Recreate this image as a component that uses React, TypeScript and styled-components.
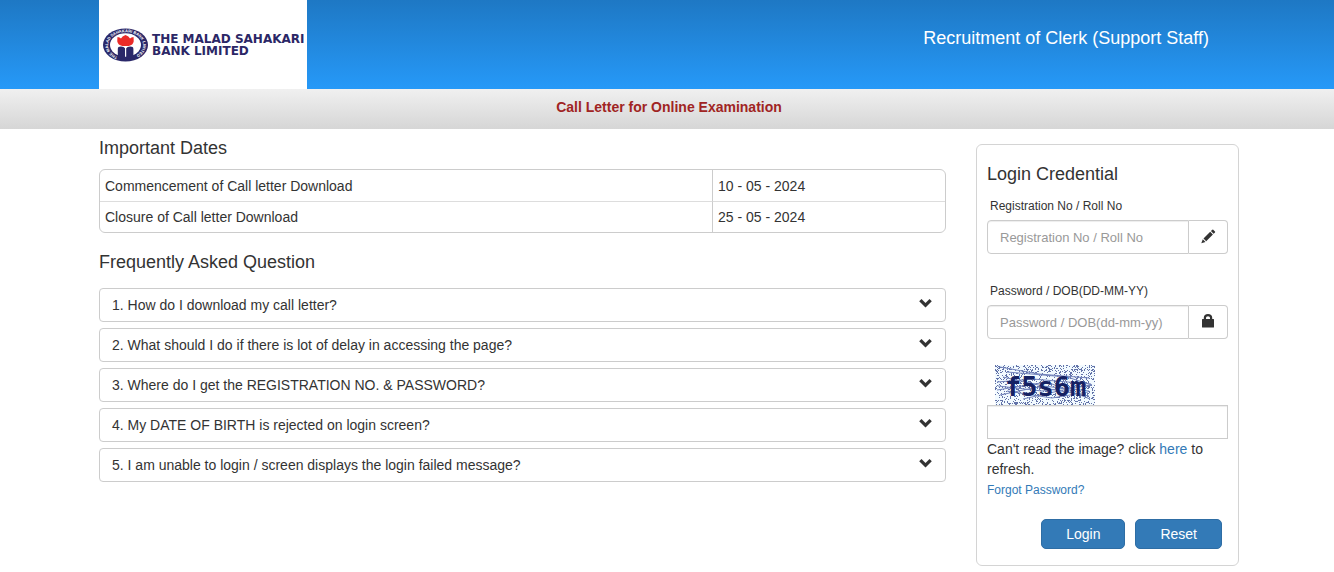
import React from "react";
import styled, { createGlobalStyle, css } from "styled-components";

const GlobalStyle = createGlobalStyle`
  *, *::before, *::after { box-sizing: border-box; }
  body {
    margin: 0;
    background: #fff;
    color: #333;
    font-family: "Liberation Sans", Arial, sans-serif;
    font-size: 14px;
    line-height: 20px;
  }
  input, button { font-family: inherit; color: inherit; }
`;

const Container = styled.div`
  width: 100%;
  max-width: 1144px;
  margin: 0 auto;
  padding-left: 4px;
`;

const TopBar = styled.header`
  background: linear-gradient(#1e78c4, #2699f8);
`;

const TopBarInner = styled(Container)`
  display: flex;
  justify-content: space-between;
  align-items: flex-start;
`;

const Brand = styled.div`
  display: flex;
  align-items: center;
  gap: 3px;
  width: 208px;
  height: 89px;
  padding-left: 3px;
  background: #fff;
`;

const BrandName = styled.span`
  color: #2b2766;
  font-family: "DejaVu Sans", Verdana, sans-serif;
  font-size: 12px;
  font-weight: bold;
  line-height: 12px;
  white-space: nowrap;
`;

const PostTitle = styled.h1`
  margin: 0;
  padding: 28px 30px 0 0;
  color: #fff;
  font-size: 18px;
  font-weight: normal;
  line-height: 20px;
`;

const SubBar = styled.div`
  height: 40px;
  padding-top: 8px;
  background: linear-gradient(#f0f0f0, #d6d6d6);
  text-align: center;
`;

const SubTitle = styled.h2`
  margin: 0;
  color: #a02423;
  font-size: 14px;
  line-height: 20px;
`;

const Columns = styled(Container)`
  display: grid;
  grid-template-columns: minmax(0, 1fr) 263px;
  gap: 30px;
  align-items: start;
`;

const Heading = styled.h3`
  margin: 0;
  font-size: 18px;
  font-weight: normal;
  line-height: 20px;
`;

const Section = styled.section<{ $gap: number; $top: number }>`
  display: flex;
  flex-direction: column;
  gap: ${(p) => p.$gap}px;
  padding-top: ${(p) => p.$top}px;
`;

const DatesTable = styled.table`
  width: 100%;
  border: 1px solid #ccc;
  border-radius: 6px;
  border-collapse: separate;
  border-spacing: 0;
  table-layout: fixed;
`;

const DateCell = styled.td`
  height: 31px;
  padding: 0 5px;
  tr + tr > & { border-top: 1px solid #ddd; }
  & + & { width: 233px; border-left: 1px solid #ccc; }
`;

const FaqList = styled.div`
  display: flex;
  flex-direction: column;
  gap: 6px;
`;

const FaqItem = styled.button`
  display: flex;
  justify-content: space-between;
  align-items: flex-start;
  height: 34px;
  padding: 6px 12px;
  border: 1px solid #ccc;
  border-radius: 4px;
  background: #fff;
  font-size: 14px;
  line-height: 20px;
  text-align: left;
  cursor: pointer;
`;

const LoginCard = styled.form`
  display: flex;
  flex-direction: column;
  margin-top: 15px;
  padding: 19px 10px 16px;
  border: 1px solid #d4d4d4;
  border-radius: 6px;
`;

const Field = styled.div`
  display: flex;
  flex-direction: column;
  gap: 4px;
  padding-top: 12px;
  margin-bottom: 15px;
`;

const FieldLabel = styled.label`
  padding-left: 3px;
  font-size: 12px;
  line-height: 20px;
`;

const InputGroup = styled.div`
  display: flex;
`;

const inputBase = css`
  min-width: 0;
  height: 34px;
  padding: 0 12px;
  border: 1px solid #ccc;
  background: #fff;
  box-shadow: inset 0 1px 1px rgba(0, 0, 0, 0.075);
  font-size: 13px;
  &::placeholder { color: #999; opacity: 1; }
`;

const GroupInput = styled.input`
  ${inputBase}
  flex: 1;
  border-radius: 4px 0 0 4px;
`;

const Addon = styled.span`
  display: flex;
  justify-content: center;
  padding-top: 8px;
  width: 39px;
  border: 1px solid #ccc;
  border-left: 0;
  border-radius: 0 4px 4px 0;
`;

const CaptchaInput = styled.input`
  ${inputBase}
`;

const CaptchaImage = styled.svg`
  display: block;
  margin: 11px 0 0 8px;
`;

const CaptchaHelp = styled.p`
  margin: 0 0 1px;
`;

const Link = styled.a<{ $small?: boolean }>`
  color: #337ab7;
  text-decoration: none;
  ${(p) => p.$small && "font-size: 12px; align-self: flex-start;"}
`;

const Actions = styled.div`
  display: flex;
  justify-content: flex-end;
  gap: 10px;
  padding: 19px 6px 0 0;
`;

const ActionButton = styled.button`
  height: 30px;
  padding: 0 24px;
  border: 1px solid #2e6da4;
  border-radius: 5px;
  background: #337ab7;
  color: #fff;
  font-size: 14px;
  line-height: 20px;
  cursor: pointer;
`;

const ChevronIcon = () => (
  <svg width="14" height="16" viewBox="0 0 14 16" aria-hidden="true">
    <path d="M.2 6.300 2.500 4 6.500 7.900 10.500 4l2.300 2.300-6.300 6.200z" fill="#333" />
  </svg>
);

const PencilIcon = () => (
  <svg width="15" height="15" viewBox="0 0 15 15" aria-hidden="true">
    <path d="m11.300.800.700-.300 2.200 2.200-.200.700-1.400 1.400-2.700-2.700zM9.200 2.800l2.700 2.700-6.700 6.700-2.700-2.700zM1.800 10.200l2.700 2.700L.3 14.200z" fill="#333" />
  </svg>
);

const LockIcon = () => (
  <svg width="15" height="14" viewBox="0 0 15 14" aria-hidden="true">
    <path d="M2.800 5V3.500Q3 0 7 0t4.200 3.500V5h1.400q.4 0 .4.400V13q0 .6-.6.600H1.600Q1 13.600 1 13V5.400Q1 5 1.400 5zM5 5h4V3.800Q9 2.200 7 2.200T5 3.800z" fill="#333" />
  </svg>
);

const Emblem = () => (
  <svg width="47" height="34" viewBox="0 0 47 34" aria-hidden="true">
    <ellipse cx="23.500" cy="17" rx="22.500" ry="16.500" fill="#2a2869" />
    <ellipse cx="23.500" cy="17" rx="15.500" ry="11.700" fill="#fff" />
    <defs>
      <path id="emblem-ring" d="M15.500 28.600A17.500 12.900 0 1 1 31.500 28.600" />
    </defs>
    <text fill="#fff" fontSize="4" fontWeight="bold">
      <textPath href="#emblem-ring">THE MALAD SAHAKARI BANK LIMITED</textPath>
    </text>
    <path d="M15.500 9q2.300.3 3.500 1.500 1-2.200 4.500-3.500Q27 8.300 28 10.500 29.200 9.300 31.500 9q.300 2.500.2 4.500-.6 3.500-5 4.500h-6.400q-4.400-1-5-4.500-.1-2 .2-4.500z" fill="#ea2b28" />
    <path d="M15.800 29.500V21q0-2.400 3.200-2.400 3 0 4 1.700V30q-4 .5-7.200-.500zM24.200 30v-9.700q1-1.700 4-1.700 3.200 0 3.200 2.400v8.500q-3.200 1-7.200.5z" fill="#2a2869" />
  </svg>
);

// Deterministic speckle so the captcha looks the same on every load.
const buildSpeckle = (width: number, height: number, density: number) => {
  let seed = 73;
  let d = "";
  for (let y = 0; y < height; y++) {
    for (let x = 0; x < width; x++) {
      seed = (seed * 16807) % 2147483647;
      if (seed / 2147483647 < density) d += `M${x} ${y}h1v1h-1z`;
    }
  }
  return d;
};
const speckle = buildSpeckle(100, 40, 0.25);

const Captcha = () => (
  <CaptchaImage width="100" height="40" viewBox="0 0 100 40" role="img" aria-label="Captcha">
    <rect width="100" height="40" fill="#f2faff" />
    <path d={speckle} fill="#6272a8" shapeRendering="crispEdges" />
    <path
      d="M5 2 44 9 94 13M12 7l60 5 25 8M2 17l36-3 58 5M3 21l44 5 50-6M8 12l40 9 46 5M5 30l38-8 51 9M12 26l45 7 36-6M28 34l40-9 28-5M2 25l50-8 43 17"
      fill="none"
      stroke="#7383bb"
      strokeWidth="1"
    />
    <text x="10" y="31" fill="#152163" fontFamily="DejaVu Sans Mono, monospace" fontSize="27" fontWeight="bold">
      f5s6m
    </text>
  </CaptchaImage>
);

const dates = [
  ["Commencement of Call letter Download", "10 - 05 - 2024"],
  ["Closure of Call letter Download", "25 - 05 - 2024"],
];

const questions = [
  "1. How do I download my call letter?",
  "2. What should I do if there is lot of delay in accessing the page?",
  "3. Where do I get the REGISTRATION NO. & PASSWORD?",
  "4. My DATE OF BIRTH is rejected on login screen?",
  "5. I am unable to login / screen displays the login failed message?",
];

export default function App() {
  return (
    <>
      <GlobalStyle />
      <TopBar>
        <TopBarInner>
          <Brand>
            <Emblem />
            <BrandName>
              THE MALAD SAHAKARI
              <br />
              BANK LIMITED
            </BrandName>
          </Brand>
          <PostTitle>Recruitment of Clerk (Support Staff)</PostTitle>
        </TopBarInner>
      </TopBar>
      <SubBar>
        <Container>
          <SubTitle>Call Letter for Online Examination</SubTitle>
        </Container>
      </SubBar>
      <Columns as="main">
        <div>
          <Section $top={9} $gap={11}>
            <Heading>Important Dates</Heading>
            <DatesTable>
              <tbody>
                {dates.map(([label, date]) => (
                  <tr key={label}>
                    <DateCell>{label}</DateCell>
                    <DateCell>{date}</DateCell>
                  </tr>
                ))}
              </tbody>
            </DatesTable>
          </Section>
          <Section $top={19} $gap={16}>
            <Heading>Frequently Asked Question</Heading>
            <FaqList>
              {questions.map((question) => (
                <FaqItem type="button" key={question}>
                  {question}
                  <ChevronIcon />
                </FaqItem>
              ))}
            </FaqList>
          </Section>
        </div>
        <LoginCard onSubmit={(e) => e.preventDefault()}>
          <Heading>Login Credential</Heading>
          <Field>
            <FieldLabel htmlFor="registration">Registration No / Roll No</FieldLabel>
            <InputGroup>
              <GroupInput id="registration" type="text" placeholder="Registration No / Roll No" />
              <Addon>
                <PencilIcon />
              </Addon>
            </InputGroup>
          </Field>
          <Field>
            <FieldLabel htmlFor="password">Password / DOB(DD-MM-YY)</FieldLabel>
            <InputGroup>
              <GroupInput id="password" type="password" placeholder="Password / DOB(dd-mm-yy)" />
              <Addon>
                <LockIcon />
              </Addon>
            </InputGroup>
          </Field>
          <Captcha />
          <CaptchaInput type="text" aria-label="Captcha text" />
          <CaptchaHelp>
            Can't read the image? click <Link href="#refresh">here</Link> to refresh.
          </CaptchaHelp>
          <Link href="#forgot" $small>
            Forgot Password?
          </Link>
          <Actions>
            <ActionButton type="submit">Login</ActionButton>
            <ActionButton type="reset">Reset</ActionButton>
          </Actions>
        </LoginCard>
      </Columns>
    </>
  );
}
